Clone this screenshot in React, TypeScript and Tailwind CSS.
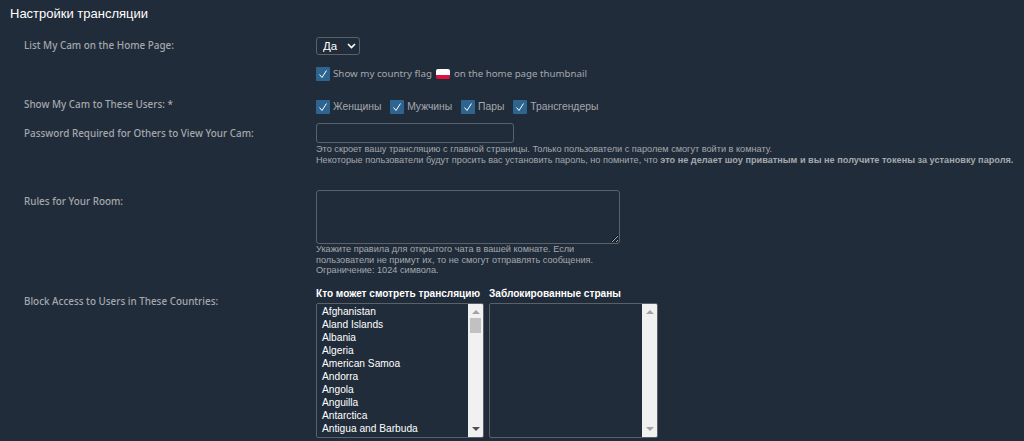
const countries = [
  'Afghanistan',
  'Aland Islands',
  'Albania',
  'Algeria',
  'American Samoa',
  'Andorra',
  'Angola',
  'Anguilla',
  'Antarctica',
  'Antigua and Barbuda',
];

const labelFont = "[font-family:'Noto_Sans',sans-serif]";

function Check({ label, children }: { label?: string; children?: React.ReactNode }) {
  return (
    <label className="flex items-center gap-[3px]">
      <span className="flex h-[14px] w-[14px] items-center justify-center rounded-[1px] bg-[#2d6590]">
        <svg width="10" height="10" viewBox="0 0 10 10" fill="none">
          <path d="M1.5 5.5 L4 8.5 L8.5 1.5" stroke="#fff" strokeWidth="1" />
        </svg>
      </span>
      {label && <span className="text-[10.35px] text-[#a4a8ad]">{label}</span>}
      {children}
    </label>
  );
}

function Scrollbar({ thumb }: { thumb?: boolean }) {
  return (
    <div className="flex w-[15px] shrink-0 flex-col items-center bg-[#f1f1f1] pt-[6px]">
      <span className="h-0 w-0 border-x-[4px] border-b-[4px] border-x-transparent border-b-[#a3a3a3]" />
      {thumb && <span className="mt-[4px] h-[15px] w-[11px] bg-[#c1c1c1]" />}
      <span
        className={`mt-auto mb-[6px] h-0 w-0 border-x-[4px] border-t-[4px] border-x-transparent ${
          thumb ? 'border-t-[#505050]' : 'border-t-[#a3a3a3]'
        }`}
      />
    </div>
  );
}

function Row({
  label,
  className,
  labelClass,
  children,
}: {
  label: string;
  className?: string;
  labelClass?: string;
  children: React.ReactNode;
}) {
  return (
    <div className={`flex leading-[15px] ${className ?? ''}`}>
      <div className={`w-[292px] shrink-0 text-[9.9px] font-medium text-[#a4a8ad] ${labelFont} ${labelClass ?? ''}`}>
        {label}
      </div>
      <div>{children}</div>
    </div>
  );
}

export default function App() {
  return (
    <div className="h-[441px] overflow-hidden bg-[#212c3a] pl-[10px] pt-[6px] font-['Liberation_Sans',sans-serif]">
      <h2 className="text-[13px] leading-[15px] text-white">Настройки трансляции</h2>

      <div className="pl-[14px] pt-[16px]">
        <Row label="List My Cam on the Home Page:" labelClass="pt-[1px]">
          <div className="relative h-[18px] w-[44px]">
            <select className="block h-[18px] w-[44px] appearance-none rounded-[3px] border border-[#5b6168] bg-transparent pl-[6px] text-[11.5px] font-medium text-white">
              <option>Да</option>
            </select>
            <svg className="pointer-events-none absolute right-[4px] top-[6px]" width="9" height="6" viewBox="0 0 9 6" fill="none">
              <path d="M1 1 L4.5 4.5 L8 1" stroke="#fff" strokeWidth="1.6" />
            </svg>
          </div>
          <div className="mt-[11px]">
            <Check>
              <span className={`text-[9.75px] text-[#a4a8ad] ${labelFont}`}>Show my country flag</span>
              <span className="mx-[1px] flex h-[10px] w-[14px] flex-col overflow-hidden rounded-[2px]">
                <span className="h-[6px] bg-white" />
                <span className="h-[4px] bg-[#dc143c]" />
              </span>
              <span className={`text-[9.7px] text-[#a4a8ad] ${labelFont}`}>on the home page thumbnail</span>
            </Check>
          </div>
        </Row>

        <Row label="Show My Cam to These Users: *" className="mt-[16px]">
          <div className="flex gap-[8.8px] pt-[2px]">
            <Check label="Женщины" />
            <Check label="Мужчины" />
            <Check label="Пары" />
            <Check label="Трансгендеры" />
          </div>
        </Row>

        <Row label="Password Required for Others to View Your Cam:" className="mt-[9px]" labelClass="pt-[3px]">
          <input className="block h-[20px] w-[198px] rounded-[3px] border border-[#5b6168] bg-transparent" />
          <p className="mt-[1px] text-[9.17px] leading-[10.5px] text-[#a4a8ad]">
            Это скроет вашу трансляцию с главной страницы. Только пользователи с паролем смогут войти в комнату.
            <br />
            Некоторые пользователи будут просить вас установить пароль, но помните, что{' '}
            <b>это не делает шоу приватным и вы не получите токены за установку пароля.</b>
          </p>
        </Row>

        <Row label="Rules for Your Room:" className="mt-[25px]" labelClass="pt-[4px]">
          <textarea className="block h-[54px] w-[304px] rounded-[3px] border border-[#5b6168] bg-transparent" />
          <p className="w-[304px] text-[9.17px] leading-[10.5px] text-[#a4a8ad]">
            Укажите правила для открытого чата в вашей комнате. Если пользователи не примут их, то не смогут отправлять
            сообщения.
            <br />
            Ограничение: 1024 символа.
          </p>
        </Row>

        <Row label="Block Access to Users in These Countries:" className="mt-[10px]" labelClass="pt-[8px]">
          <div className="flex gap-[5px]">
            <div className="w-[168px]">
              <div className="text-[10.05px] font-bold whitespace-nowrap text-white">Кто может смотреть трансляцию</div>
              <div className="mt-[2px] flex h-[135px] overflow-hidden rounded-[2px] border border-[#5b6168]">
                <ul className="flex-1 pl-[5px] pt-[1px] text-[10.2px] leading-[13px] text-white">
                  {countries.map((c) => (
                    <li key={c}>{c}</li>
                  ))}
                </ul>
                <Scrollbar thumb />
              </div>
            </div>
            <div className="w-[169px]">
              <div className="text-[10.1px] font-bold whitespace-nowrap text-white">Заблокированные страны</div>
              <div className="mt-[2px] flex h-[135px] overflow-hidden rounded-[2px] border border-[#5b6168]">
                <div className="flex-1" />
                <Scrollbar />
              </div>
            </div>
          </div>
        </Row>
      </div>
    </div>
  );
}
